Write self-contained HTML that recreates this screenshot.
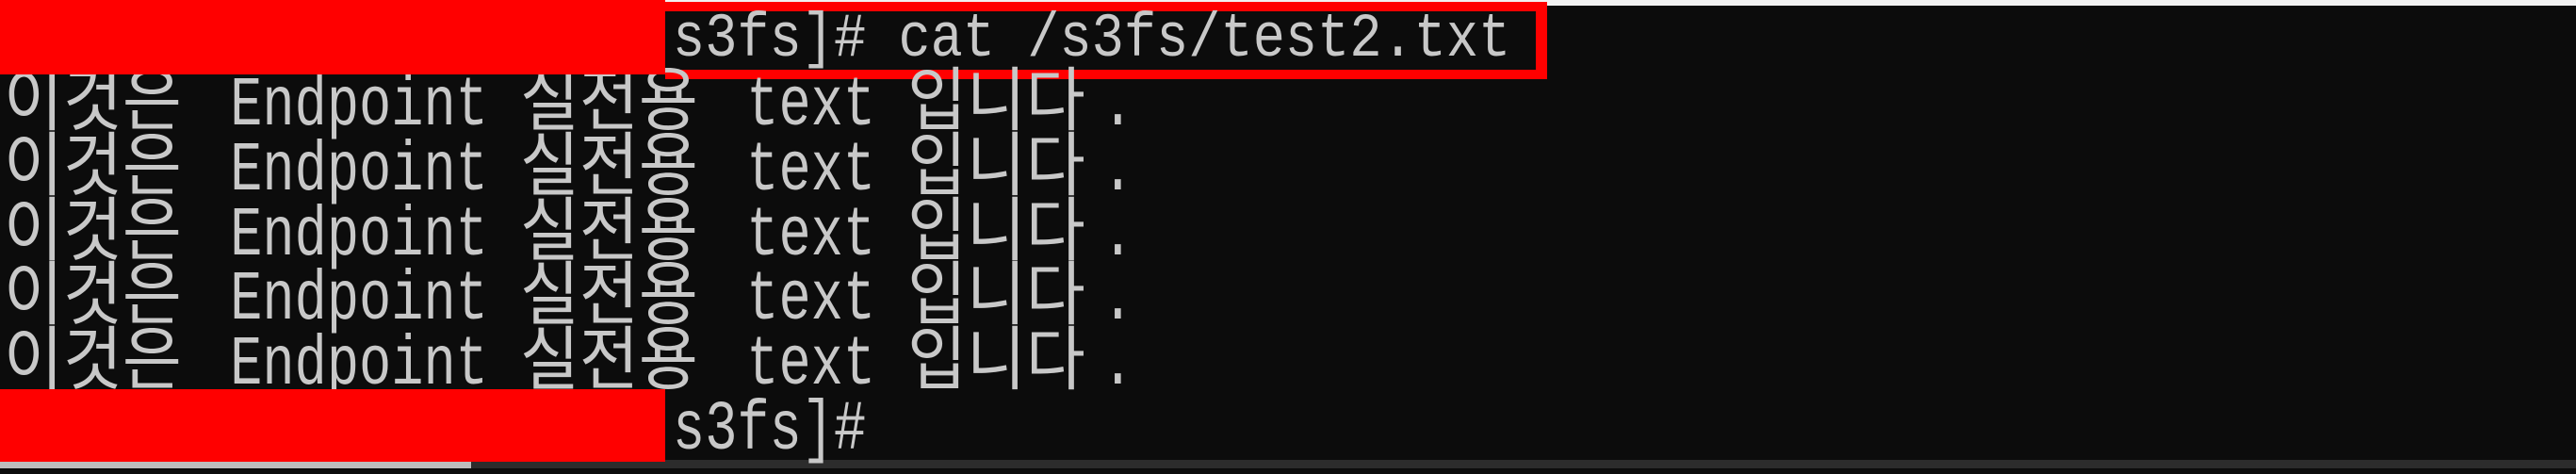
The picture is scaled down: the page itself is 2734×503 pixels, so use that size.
<!DOCTYPE html>
<html><head><meta charset="utf-8"><style>
html,body{margin:0;padding:0;}
body{width:2734px;height:497px;background:#0c0c0c;position:relative;overflow:hidden;font-family:"Liberation Mono","Noto Sans CJK KR",monospace;color:#c8c8c8;}
.top{position:absolute;left:0;top:0;width:2734px;height:6px;background:#f2f2f2;}
.bot{position:absolute;left:0;top:488px;width:2734px;height:9px;background:#2c2c2c;}
.bot2{position:absolute;left:0;top:488px;width:500px;height:9px;background:#bdbdbd;}
.line{position:absolute;left:4px;height:69px;line-height:69px;font-size:57px;white-space:pre;transform-origin:0 50%;transform:scaleY(1.3);}
.k{display:inline-block;width:206px;vertical-align:top;}
.k i{display:inline-block;font-style:normal;transform-origin:0 50%;transform:scaleX(1.2);}
.red{position:absolute;background:#ff0000;}
.box{position:absolute;left:706px;top:2px;width:936px;height:82px;background:#ff0000;}
.boxin{position:absolute;left:706px;top:12px;width:924px;height:62px;background:#0c0c0c;}
</style></head><body>
<div class="top"></div>
<div class="bot"></div><div class="bot2"></div>
<div class="box"></div><div class="boxin"></div>
<div class="line" style="left:714px;top:9px;transform:scaleY(1.15)">s3fs]# cat /s3fs/test2.txt</div>
<div class="line" style="top:80px;"><span class="k"><i>이것은</i></span> Endpoint <span class="k"><i>실전용</i></span> text <span class="k"><i>입니다</i></span>.</div>
<div class="line" style="top:149px;"><span class="k"><i>이것은</i></span> Endpoint <span class="k"><i>실전용</i></span> text <span class="k"><i>입니다</i></span>.</div>
<div class="line" style="top:218px;"><span class="k"><i>이것은</i></span> Endpoint <span class="k"><i>실전용</i></span> text <span class="k"><i>입니다</i></span>.</div>
<div class="line" style="top:286px;"><span class="k"><i>이것은</i></span> Endpoint <span class="k"><i>실전용</i></span> text <span class="k"><i>입니다</i></span>.</div>
<div class="line" style="top:355px;"><span class="k"><i>이것은</i></span> Endpoint <span class="k"><i>실전용</i></span> text <span class="k"><i>입니다</i></span>.</div>
<div class="line" style="left:714px;top:424px;">s3fs]#</div>
<div class="red" style="left:0;top:0;width:706px;height:79px;"></div>
<div class="red" style="left:0;top:413px;width:706px;height:77px;"></div>
</body></html>
